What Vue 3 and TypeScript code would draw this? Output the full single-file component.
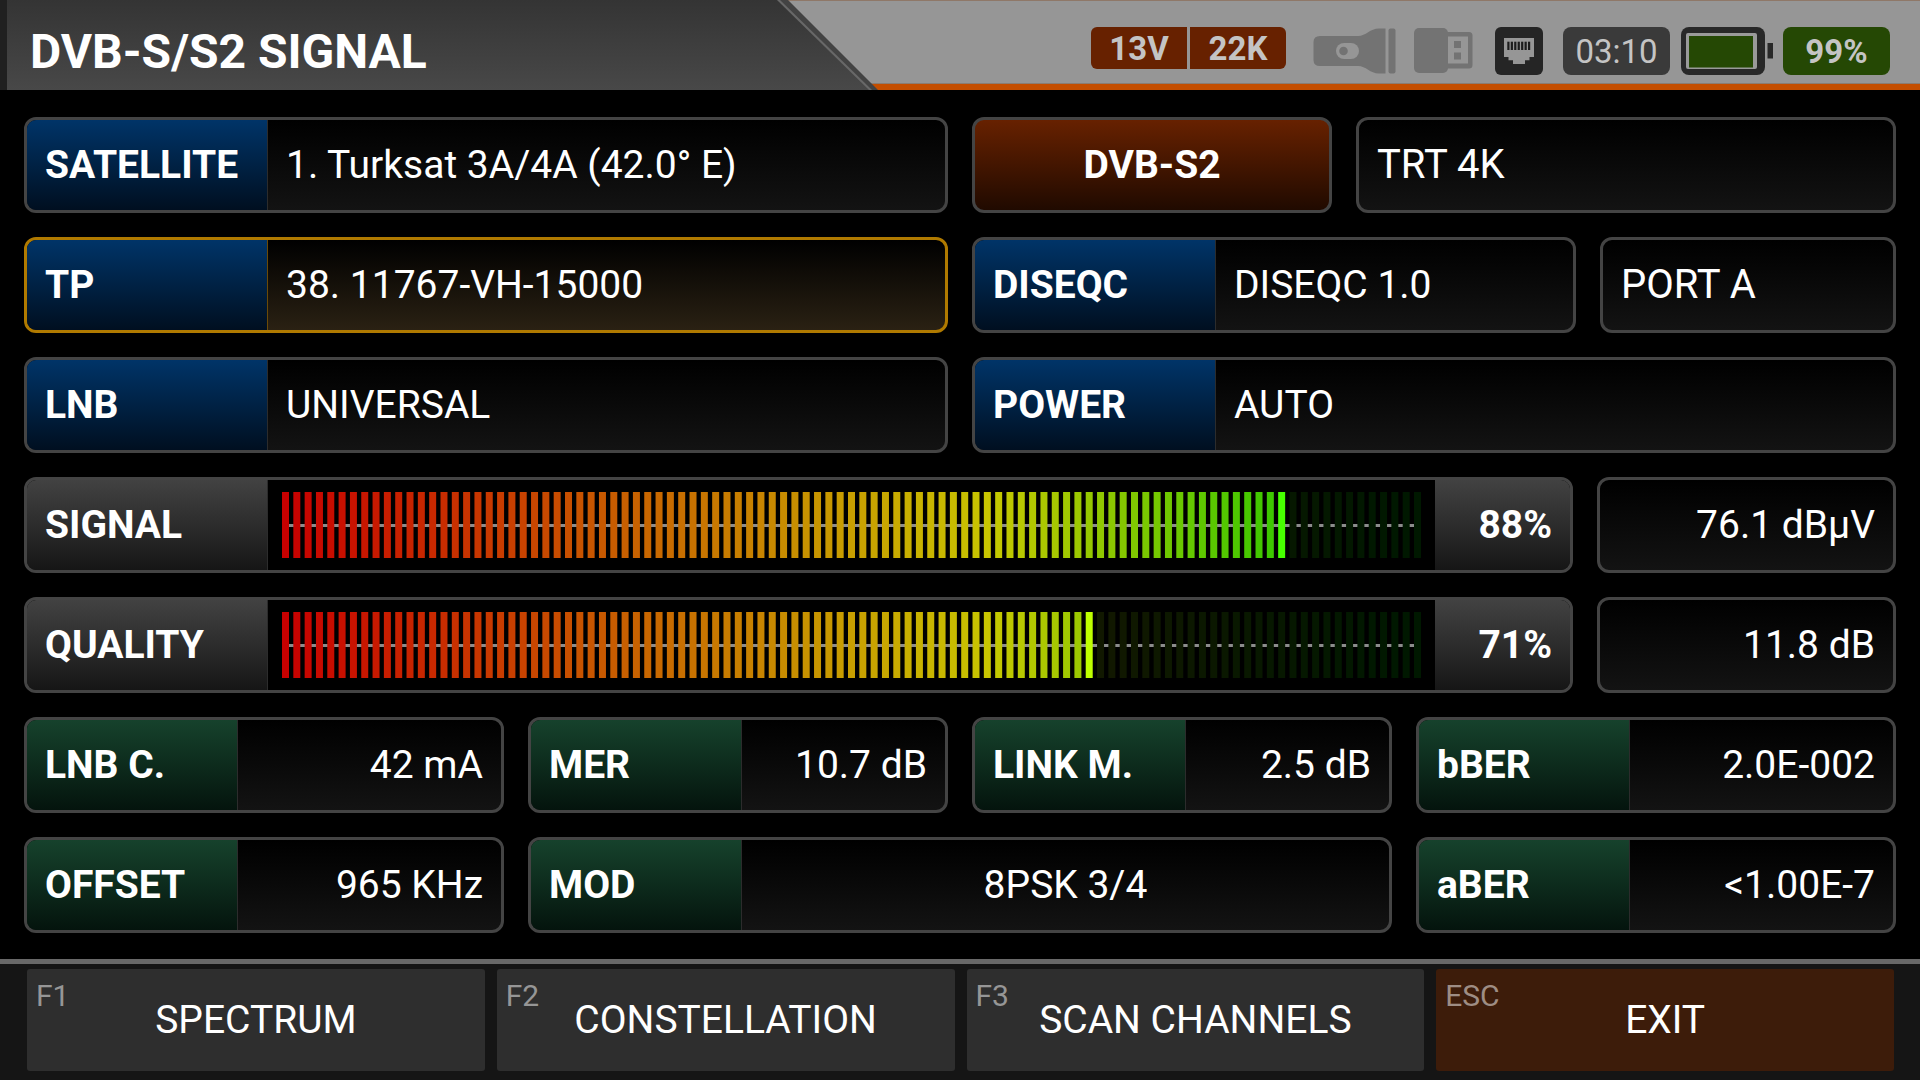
<script setup lang="ts">
interface Reading {
  label: string
  value: string
  area: string
  centered?: boolean
}

interface Level {
  label: string
  percent: number
  reading: string
}

interface FunctionKey {
  key: string
  label: string
  exit?: boolean
}

const levels: Level[] = [
  { label: 'SIGNAL', percent: 88, reading: '76.1 dBµV' },
  { label: 'QUALITY', percent: 71, reading: '11.8 dB' },
]

const readings: Reading[] = [
  { label: 'LNB C.', value: '42 mA', area: 'lnbc' },
  { label: 'MER', value: '10.7 dB', area: 'mer' },
  { label: 'LINK M.', value: '2.5 dB', area: 'link' },
  { label: 'bBER', value: '2.0E-002', area: 'bber' },
  { label: 'OFFSET', value: '965 KHz', area: 'offset' },
  { label: 'MOD', value: '8PSK 3/4', area: 'mod', centered: true },
  { label: 'aBER', value: '<1.00E-7', area: 'aber' },
]

const functionKeys: FunctionKey[] = [
  { key: 'F1', label: 'SPECTRUM' },
  { key: 'F2', label: 'CONSTELLATION' },
  { key: 'F3', label: 'SCAN CHANNELS' },
  { key: 'ESC', label: 'EXIT', exit: true },
]

const BAR_COUNT = 101
const BAR_WIDTH = 7
const SCALE_WIDTH = 1139
const barPitch = (SCALE_WIDTH - BAR_WIDTH) / (BAR_COUNT - 1)
const bars = Array.from({ length: BAR_COUNT }, (_, i) => i)
const pins = Array.from({ length: 7 }, (_, i) => i)

// Red rises to yellow over the first two thirds, then falls to green.
function barColor(index: number, percent: number): string {
  const red = index <= 62 ? 1 : Math.max(0, 1 - (index - 62) / 36)
  const green = Math.min(1, index / 63)
  const peak = index === percent ? 255 : index < percent ? 200 : 24
  return `rgb(${Math.round(red * peak)}, ${Math.round(green * peak)}, 0)`
}
</script>

<template>
  <div class="screen">
    <header class="topbar">
      <div class="title-panel">
        <h1 class="title">DVB-S/S2 SIGNAL</h1>
      </div>
      <svg class="title-edge" viewBox="0 0 104 90" aria-hidden="true">
        <defs>
          <linearGradient id="panel" x1="0" y1="0" x2="0" y2="1">
            <stop offset="0" stop-color="#343434" />
            <stop offset="1" stop-color="#484848" />
          </linearGradient>
        </defs>
        <path d="M0 0H12L102 90H0Z" fill="#434343" />
        <path d="M0 0H2L94 90H0Z" fill="url(#panel)" />
        <path d="M1 0H4L96 90H93Z" fill="#686868" />
      </svg>

      <div class="status">
        <div class="lnb-state">
          <span class="lnb-tag">13V</span>
          <span class="lnb-tag">22K</span>
        </div>
        <div class="icons">
          <svg width="84" height="48" viewBox="0 0 84 48" role="img" aria-label="Flashlight">
            <path
              d="M8 9H46C54 9 58 1.500 67 1.500H73.500V46.500H67C58 46.500 54 39 46 39H8Q1.500 39 1.500 33V15Q1.500 9 8 9Z"
              fill="#737373"
            />
            <rect x="76.500" y="1.500" width="7" height="45" rx="2" fill="#737373" />
            <rect x="24" y="16" width="23" height="16" rx="8" fill="#969696" />
            <circle cx="31.500" cy="24" r="4.300" fill="#737373" />
          </svg>
          <svg width="63" height="48" viewBox="0 0 63 48" role="img" aria-label="USB">
            <rect x="0" y="1" width="34" height="45" rx="5" fill="#737373" />
            <path
              fill-rule="evenodd"
              d="M32 5H55Q58.500 5 58.500 8.500V38Q58.500 41.500 55 41.500H32ZM34 9.500V36.500H54V9.500Z"
              fill="#737373"
            />
            <rect x="40" y="14" width="7" height="7" fill="#737373" />
            <rect x="40" y="25.500" width="7" height="7" fill="#737373" />
          </svg>
          <svg width="48" height="48" viewBox="0 0 48 48" role="img" aria-label="Ethernet">
            <rect width="48" height="48" rx="6" fill="#252525" />
            <path d="M9 11H39V30H34.500V33.300H30V37H18V33.300H13.500V30H9Z" fill="#969696" />
            <rect
              v-for="p in pins"
              :key="p"
              :x="12.3 + p * 3.45"
              y="14.700"
              width="2.200"
              height="8.300"
              fill="#1c1c1c"
            />
          </svg>
        </div>
        <div class="power-state">
          <time class="chip clock">03:10</time>
          <svg width="93" height="48" viewBox="0 0 93 48" role="img" aria-label="Battery">
            <rect x="1" y="0" width="84" height="48" rx="8" fill="#282828" />
            <rect x="6" y="6" width="71" height="36" rx="2" fill="#9a9a9a" />
            <rect x="9" y="9" width="64" height="31.500" fill="#254804" />
            <path d="M87.500 16H93V31.500H87.500Z" fill="#282828" />
          </svg>
          <span class="chip charge">99%</span>
        </div>
      </div>
    </header>

    <main class="rows">
      <div class="row row-source">
        <button type="button" class="box">
          <span class="label blue">SATELLITE</span>
          <span class="value">1. Turksat 3A/4A (42.0° E)</span>
        </button>
        <button type="button" class="box standard">DVB-S2</button>
        <button type="button" class="box"><span class="value plain">TRT 4K</span></button>
      </div>

      <div class="row row-port">
        <button type="button" class="box selected">
          <span class="label blue">TP</span>
          <span class="value">38. 11767-VH-15000</span>
        </button>
        <button type="button" class="box">
          <span class="label blue">DISEQC</span>
          <span class="value">DISEQC 1.0</span>
        </button>
        <button type="button" class="box"><span class="value plain">PORT A</span></button>
      </div>

      <div class="row row-half">
        <button type="button" class="box">
          <span class="label blue">LNB</span>
          <span class="value">UNIVERSAL</span>
        </button>
        <button type="button" class="box">
          <span class="label blue">POWER</span>
          <span class="value">AUTO</span>
        </button>
      </div>

      <div v-for="level in levels" :key="level.label" class="row row-level">
        <div class="box">
          <span class="label gray">{{ level.label }}</span>
          <div
            class="scale"
            role="meter"
            :aria-label="level.label"
            aria-valuemin="0"
            aria-valuemax="100"
            :aria-valuenow="level.percent"
          >
            <svg class="bars" :viewBox="`0 0 ${SCALE_WIDTH} 66`" preserveAspectRatio="none">
              <rect x="0" y="32" :width="SCALE_WIDTH" height="3" fill="#8c8c8c" />
              <rect
                v-for="i in bars"
                :key="i"
                :x="i * barPitch"
                y="0"
                :width="BAR_WIDTH"
                height="66"
                :fill="barColor(i, level.percent)"
              />
            </svg>
          </div>
          <span class="percent">{{ level.percent }}%</span>
        </div>
        <div class="box"><span class="value right">{{ level.reading }}</span></div>
      </div>

      <div class="readings">
        <div v-for="r in readings" :key="r.label" class="box" :class="r.area">
          <span class="label green">{{ r.label }}</span>
          <span class="value" :class="r.centered ? 'center' : 'right'">{{ r.value }}</span>
        </div>
      </div>
    </main>

    <footer class="keys">
      <button
        v-for="k in functionKeys"
        :key="k.key"
        type="button"
        class="key"
        :class="{ exit: k.exit }"
      >
        <span class="key-name">{{ k.key }}</span>
        <span class="key-label">{{ k.label }}</span>
      </button>
    </footer>
  </div>
</template>

<style>
body {
  margin: 0;
  background: #000;
}
</style>

<style scoped>
.screen {
  display: flex;
  flex-direction: column;
  min-height: 100vh;
  background: #000;
  color: #fff;
  font-family: Roboto, 'Liberation Sans', sans-serif;
  font-size: 39px;
  line-height: 48px;
}

.topbar {
  display: flex;
  height: 90px;
  background: linear-gradient(#8f7868 0 1px, #969696 1px 83px, #8c7c70 83px 84px, #c44e00 84px);
}

.title-panel {
  flex: 0 1 776px;
  box-sizing: border-box;
  padding: 24px 0 0 23px;
  border-left: 7px solid #202020;
  background: linear-gradient(#343434, #484848);
}

.title {
  margin: 0;
  font-size: 48px;
  line-height: 56px;
  font-weight: 700;
  white-space: nowrap;
}

.title-edge {
  flex: none;
  width: 104px;
  height: 90px;
}

.status {
  flex: 1;
  display: flex;
  justify-content: flex-end;
  align-items: flex-start;
  padding: 27px 30px 0 0;
}

.status svg {
  display: block;
}

.lnb-state {
  display: flex;
  gap: 3px;
  margin-right: 26px;
  border-radius: 6px;
  overflow: hidden;
}

.lnb-tag {
  width: 96px;
  height: 42px;
  line-height: 43px;
  background: #672100;
  color: #c4c4c4;
  font-size: 33px;
  font-weight: 700;
  text-align: center;
}

.icons {
  display: flex;
  gap: 18px;
  margin-right: 20px;
}

.power-state {
  display: flex;
  gap: 10px;
}

.chip {
  width: 107px;
  height: 48px;
  border-radius: 8px;
  color: #c4c4c4;
  font-size: 33px;
  line-height: 50px;
  text-align: center;
}

.clock {
  background: #3a3a3a;
}

.charge {
  background: #254804;
  font-weight: 700;
}

.rows {
  flex: 1;
  display: flex;
  flex-direction: column;
  gap: 24px;
  padding: 27px 24px 26px;
}

.row {
  display: grid;
  gap: 24px;
}

.row-source {
  grid-template-columns: 924fr 360fr 540fr;
}

.row-port {
  grid-template-columns: 924fr 604fr 296fr;
}

.row-half {
  grid-template-columns: 1fr 1fr;
}

.row-level {
  grid-template-columns: 1549fr 299fr;
}

.readings {
  display: grid;
  gap: 24px;
  grid-template-columns: 480fr 420fr 420fr 480fr;
  grid-template-areas:
    'lnbc mer link bber'
    'offset mod mod aber';
}

.lnbc { grid-area: lnbc; }
.mer { grid-area: mer; }
.link { grid-area: link; }
.bber { grid-area: bber; }
.offset { grid-area: offset; }
.mod { grid-area: mod; }
.aber { grid-area: aber; }

.box {
  display: flex;
  box-sizing: border-box;
  min-width: 0;
  height: 96px;
  margin: 0;
  padding: 0;
  border: 3px solid #444;
  border-radius: 12px;
  overflow: hidden;
  background: linear-gradient(#000, #131313);
  color: #fff;
  font: inherit;
  text-align: left;
  white-space: nowrap;
}

.label {
  flex: none;
  box-sizing: border-box;
  width: 241px;
  padding: 21px 0 21px 18px;
  border-right: 1px solid #2c2c2c;
  font-weight: 700;
}

.blue {
  background: linear-gradient(#003468, #000f20);
}

.gray {
  background: linear-gradient(#424242, #161616);
}

.green {
  width: 211px;
  background: linear-gradient(#16422c, #04140d);
}

.value {
  flex: 1;
  padding: 21px 18px;
}

.plain {
  font-size: 40px;
}

.right {
  text-align: right;
}

.center {
  text-align: center;
}

.standard {
  align-items: center;
  justify-content: center;
  background: linear-gradient(#672100, #200a00);
  font-weight: 700;
}

.selected {
  border-color: #b07a00;
  background: linear-gradient(#000, #2a2113);
}

.selected .label {
  border-right-color: #6a4a08;
}

.scale {
  flex: 1;
  min-width: 0;
  padding: 12px 14px;
  background: #000;
}

.bars {
  display: block;
  width: 100%;
  height: 66px;
}

.percent {
  flex: none;
  box-sizing: border-box;
  width: 135px;
  padding: 21px 18px 21px 0;
  background: linear-gradient(#424242, #161616);
  font-weight: 700;
  text-align: right;
}

.keys {
  display: grid;
  grid-template-columns: repeat(4, 1fr);
  gap: 12px;
  padding: 5px 26px 9px 27px;
  border-top: 5px solid #686868;
  background: #151515;
}

.key {
  position: relative;
  height: 102px;
  margin: 0;
  padding: 0;
  border: 0;
  border-radius: 3px;
  background: #2e2e2e;
  color: #fff;
  font: inherit;
}

.key-name {
  position: absolute;
  top: 9px;
  left: 9px;
  color: #969696;
  font-size: 30px;
  line-height: 36px;
}

.exit {
  background: #3d1c0a;
}

.exit .key-name {
  color: #9e8d84;
}
</style>
